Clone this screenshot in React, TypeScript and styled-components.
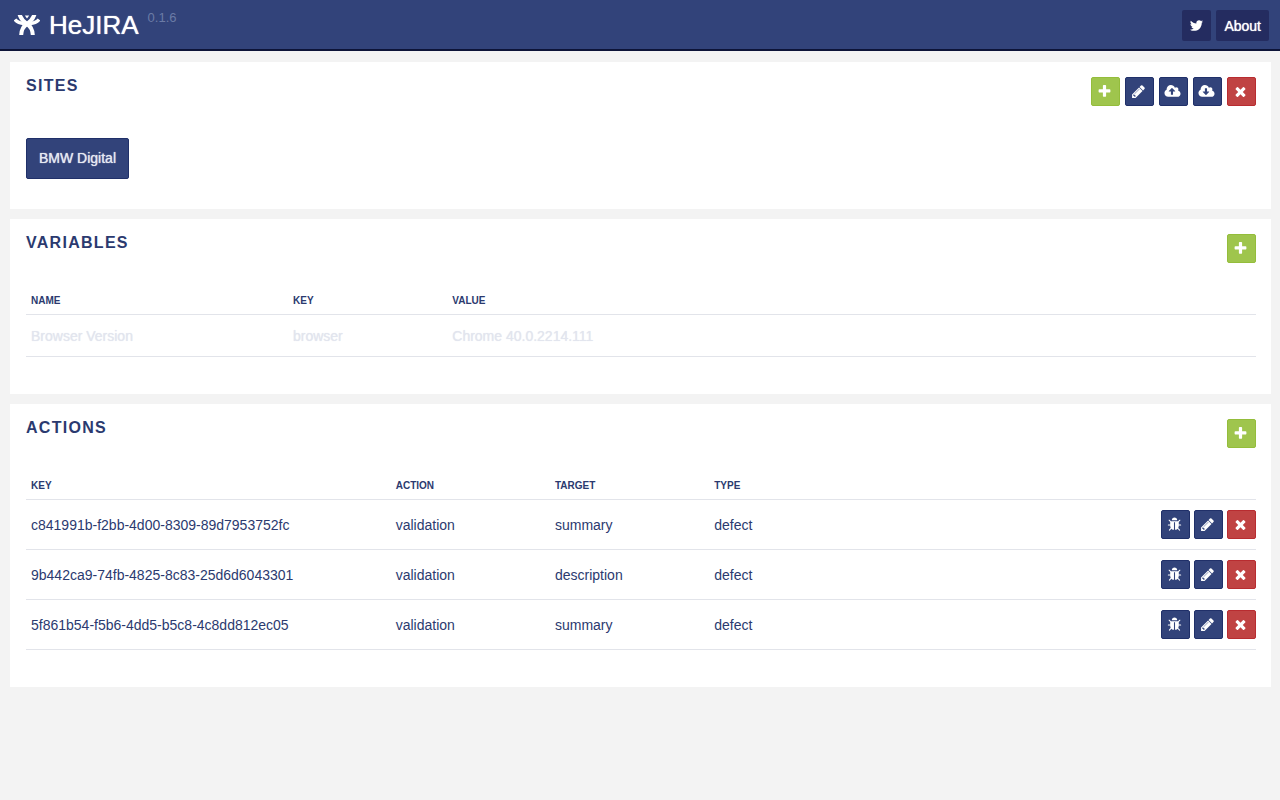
import React from 'react';
import styled, { createGlobalStyle } from 'styled-components';

const GlobalStyle = createGlobalStyle`
  * { box-sizing: border-box; }
  body {
    margin: 0;
    background: #f3f3f3;
    color: #2b3a6f;
    font: 14px/20px "Liberation Sans", Arial, Helvetica, sans-serif;
  }
`;

const CLOUD =
  'm640 288q0 159-112.5 271.5t-271.5 112.5h-1088q-185 0-316.5-131.5t-131.5-316.5q0-130 70-240t188-165q-2-30-2-43 0-212 150-362t362-150q156 0 285.5 87t188.5 231q71-62 166-62 106 0 181 75t75 181q0 76-41 138 130 31 213.5 135.5t83.5 238.5z';

const ICONS = {
  plus: 'M1600 736v192q0 40-28 68t-68 28h-416v416q0 40-28 68t-68 28h-192q-40 0-68-28t-28-68v-416h-416q-40 0-68-28t-28-68v-192q0-40 28-68t68-28h416v-416q0-40 28-68t68-28h192q40 0 68 28t28 68v416h416q40 0 68 28t28 68z',
  pencil:
    'M491 1536l91-91-235-235-91 91v107h128v128h107zm523-928q0-22-22-22-10 0-17 7l-542 542q-7 7-7 17 0 22 22 22 10 0 17-7l542-542q7-7 7-17zm-54-192l416 416-832 832h-416v-416zm683 96q0 53-37 90l-166 166-416-416 166-165q36-38 90-38 53 0 91 38l235 234q37 39 37 91z',
  times:
    'M1490 1322q0 40-28 68l-136 136q-28 28-68 28t-68-28l-294-294-294 294q-28 28-68 28t-68-28l-136-136q-28-28-28-68t28-68l294-294-294-294q-28-28-28-68t28-68l136-136q28-28 68-28t68 28l294 294 294-294q28-28 68-28t68 28l136 136q28 28 28 68t-28 68l-294 294 294 294q28 28 28 68z',
  upload:
    'M1216 864q0-14-9-23l-352-352q-9-9-23-9t-23 9l-351 351q-10 12-10 24 0 14 9 23t23 9h224v352q0 13 9.5 22.5t22.5 9.5h192q13 0 22.5-9.5t9.5-22.5v-352h224q13 0 22.5-9.5t9.5-22.5z' +
    CLOUD,
  download:
    'M1216 928q0-14-9-23t-23-9h-224v-352q0-13-9.5-22.5t-22.5-9.5h-192q-13 0-22.5 9.5t-9.5 22.5v352h-224q-13 0-22.5 9.5t-9.5 22.5q0 14 9 23l352 352q9 9 23 9t23-9l351-351q10-12 10-24zm640 224' +
    CLOUD.replace('m640 288', ''),
  bug: 'M1696 960q0 26-19 45t-45 19h-224q0 171-67 290l208 209q19 19 19 45t-19 45q-18 19-45 19t-45-19l-198-197q-5 5-15 13t-42 28.5-65 36.5-82 29-97 13v-896h-128v896q-51 0-101.5-13.5t-87-33-66-39-43.5-32.5l-15-14-183 207q-20 21-48 21-24 0-43-16-19-18-20.5-44.5t15.5-46.5l202-227q-58-114-58-274h-224q-26 0-45-19t-19-45 19-45 45-19h224v-294l-173-173q-19-19-19-45t19-45 45-19 45 19l173 173h844l173-173q19-19 45-19t45 19 19 45-19 45l-173 173v294h224q26 0 45 19t19 45zm-480-576h-640q0-133 93.5-226.5t226.5-93.5 226.5 93.5 93.5 226.5z',
  twitter:
    'M1684 408q-67 98-162 167 1 14 1 42 0 130-38 259.5t-115.5 248.5-184.5 210.5-258 146-323 54.5q-271 0-496-145 35 4 78 4 225 0 401-138-105-2-188-64.5t-114-159.5q33 5 61 5 43 0 85-11-112-23-185.5-111.5t-73.5-205.5v-4q68 38 146 41-66-44-105-115t-39-154q0-88 44-163 121 149 294.5 238.5t371.5 99.5q-8-38-8-74 0-134 94.5-228.5t228.5-94.5q140 0 236 102 109-21 205-78-37 115-142 178 93-10 186-50z',
};

type IconName = keyof typeof ICONS;

const Glyph = styled.svg`
  display: block;
  height: 15px;
  fill: currentColor;
`;

function Icon({ name }: { name: IconName }) {
  const wide = name === 'upload' || name === 'download';
  return (
    <Glyph viewBox={wide ? '-64 0 1920 1792' : '0 0 1792 1792'} width={wide ? 17 : 15} aria-hidden="true">
      <path d={ICONS[name]} />
    </Glyph>
  );
}

const Header = styled.header`
  display: flex;
  align-items: center;
  justify-content: space-between;
  height: 51px;
  padding: 0 11px 0 14px;
  background: #32437a;
  border-bottom: 2px solid #0d1438;
  color: #fff;
`;

const Brand = styled.div`
  display: flex;
  align-items: center;
`;

const Logo = styled.svg`
  width: 26px;
  height: 20px;
  margin-right: 9px;
`;

const AppName = styled.h1`
  margin: 0;
  font-size: 26px;
  line-height: 32px;
  font-weight: 400;
  text-shadow: 0 0 1px currentColor;
`;

const Version = styled.span`
  align-self: flex-start;
  margin-left: 9px;
  color: #6b7ba6;
  font-size: 13px;
  line-height: 18px;
`;

const HeaderLinks = styled.nav`
  display: flex;
  gap: 5px;
  padding-top: 2px;
`;

const HeaderLink = styled.a<{ $compact?: boolean }>`
  display: flex;
  align-items: center;
  height: 31px;
  padding: 0 ${(p) => (p.$compact ? 7 : 8)}px;
  border-radius: 2px;
  background: #242c60;
  color: #fff;
  text-decoration: none;
  text-shadow: 0 0 1px currentColor;
`;

const Page = styled.main`
  display: flex;
  flex-direction: column;
  gap: 10px;
  padding: 11px 9px 20px 10px;
`;

const Panel = styled.section`
  padding: 15px 15px 30px 16px;
  background: #fff;
`;

const PanelHeader = styled.div`
  display: flex;
  justify-content: space-between;
  height: 51px;
`;

const PanelTitle = styled.h2`
  margin: 0;
  font-size: 16px;
  line-height: 18px;
  letter-spacing: 0.08em;
  text-transform: uppercase;
`;

const Buttons = styled.div<{ $tight?: boolean }>`
  display: flex;
  justify-content: flex-end;
  align-items: flex-start;
  gap: ${(p) => (p.$tight ? 4 : 5)}px;
`;

const tones = {
  navy: ['#32437a', '#203069'],
  green: ['#9fc54d', '#94bd3b'],
  red: ['#c04343', '#b82c30'],
};

const IconButton = styled.button<{ $tone: keyof typeof tones }>`
  display: grid;
  place-items: center;
  width: 29px;
  height: 29px;
  padding: 0 2px 0 0;
  border: 1px solid ${(p) => tones[p.$tone][1]};
  border-radius: 2px;
  background: ${(p) => tones[p.$tone][0]};
  color: #fff;
  cursor: pointer;
`;

const SiteList = styled.div`
  display: flex;
  gap: 10px;
  padding-top: 10px;
`;

const SiteButton = styled.button`
  height: 41px;
  padding: 0 12px 2px;
  border: 1px solid #203069;
  border-radius: 2px;
  background: #32437a;
  color: #e6e9f2;
  font: inherit;
  text-shadow: 0 0 1px currentColor;
  cursor: pointer;
`;

const Table = styled.table`
  width: 100%;
  margin-bottom: 7px;
  border-collapse: separate;
  border-spacing: 0;
  table-layout: fixed;
`;

const Th = styled.th<{ $width?: string }>`
  width: ${(p) => p.$width ?? 'auto'};
  height: 30px;
  padding: 2px 5px 0;
  border-bottom: 1px solid #e2e4ea;
  color: #2b3a6f;
  font-size: 10px;
  line-height: 20px;
  text-align: left;
  text-transform: uppercase;
`;

const Td = styled.td<{ $muted?: boolean }>`
  height: ${(p) => (p.$muted ? 42 : 50)}px;
  padding: 0 5px;
  border-bottom: 1px solid #e2e4ea;
  color: ${(p) => (p.$muted ? '#e2e5ee' : 'inherit')};
  text-shadow: ${(p) => (p.$muted ? '0 0 1px currentColor' : 'none')};
`;

const ButtonsTd = styled(Td)`
  padding: 0;
`;

function Tool({ icon, label, tone = 'navy' }: { icon: IconName; label: string; tone?: keyof typeof tones }) {
  return (
    <IconButton type="button" $tone={tone} aria-label={label}>
      <Icon name={icon} />
    </IconButton>
  );
}

const actions = [
  ['c841991b-f2bb-4d00-8309-89d7953752fc', 'validation', 'summary', 'defect'],
  ['9b442ca9-74fb-4825-8c83-25d6d6043301', 'validation', 'description', 'defect'],
  ['5f861b54-f5b6-4dd5-b5c8-4c8dd812ec05', 'validation', 'summary', 'defect'],
];

export default function App() {
  return (
    <>
      <GlobalStyle />
      <Header>
        <Brand>
          <Logo viewBox="0 0 26 20" aria-hidden="true">
            <g fill="none" stroke="#fff">
              <path strokeWidth="3.4" d="M1 4.5Q4 8 10 8.500M25 4.500Q22 8 16 8.500" />
              <path strokeWidth="4" d="M5.500 -.5Q8 6 13 9Q18.500 12.500 18.800 20M20.500 -.5Q18 6 13 9Q7.500 12.500 7.200 20" />
            </g>
            <path fill="#fff" d="M10.800 .5h4.400l-2.200 3z" />
          </Logo>
          <AppName>HeJIRA</AppName>
          <Version>0.1.6</Version>
        </Brand>
        <HeaderLinks>
          <HeaderLink href="#twitter" aria-label="Twitter" $compact><Icon name="twitter" /></HeaderLink>
          <HeaderLink href="#about">About</HeaderLink>
        </HeaderLinks>
      </Header>
      <Page>
        <Panel>
          <PanelHeader>
            <PanelTitle>Sites</PanelTitle>
            <Buttons>
              <Tool icon="plus" label="Add site" tone="green" />
              <Tool icon="pencil" label="Edit site" />
              <Tool icon="upload" label="Upload" />
              <Tool icon="download" label="Download" />
              <Tool icon="times" label="Delete site" tone="red" />
            </Buttons>
          </PanelHeader>
          <SiteList>
            <SiteButton type="button">BMW Digital</SiteButton>
          </SiteList>
        </Panel>
        <Panel>
          <PanelHeader>
            <PanelTitle>Variables</PanelTitle>
            <Tool icon="plus" label="Add variable" tone="green" />
          </PanelHeader>
          <Table>
            <thead>
              <tr>
                <Th $width="21.3%">Name</Th>
                <Th $width="12.95%">Key</Th>
                <Th>Value</Th>
              </tr>
            </thead>
            <tbody>
              <tr>
                <Td $muted>Browser Version</Td>
                <Td $muted>browser</Td>
                <Td $muted>Chrome 40.0.2214.111</Td>
              </tr>
            </tbody>
          </Table>
        </Panel>
        <Panel>
          <PanelHeader>
            <PanelTitle>Actions</PanelTitle>
            <Tool icon="plus" label="Add action" tone="green" />
          </PanelHeader>
          <Table>
            <thead>
              <tr>
                <Th $width="29.65%">Key</Th>
                <Th $width="12.95%">Action</Th>
                <Th $width="12.95%">Target</Th>
                <Th $width="12.95%">Type</Th>
                <Th aria-label="Row tools" />
              </tr>
            </thead>
            <tbody>
              {actions.map((row) => (
                <tr key={row[0]}>
                  {row.map((cell, i) => (
                    <Td key={i}>{cell}</Td>
                  ))}
                  <ButtonsTd>
                    <Buttons $tight>
                      <Tool icon="bug" label="Test action" />
                      <Tool icon="pencil" label="Edit action" />
                      <Tool icon="times" label="Delete action" tone="red" />
                    </Buttons>
                  </ButtonsTd>
                </tr>
              ))}
            </tbody>
          </Table>
        </Panel>
      </Page>
    </>
  );
}
